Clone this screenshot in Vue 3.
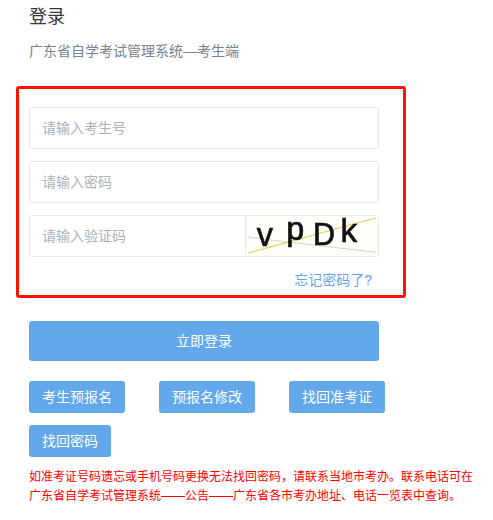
<script setup>
const fields = ['请输入考生号', '请输入密码']
const links = ['考生预报名', '预报名修改', '找回准考证', '找回密码']
</script>

<template>
  <div class="page">
    <h1 class="title">登录</h1>
    <p class="sub">广东省自学考试管理系统—考生端</p>
    <div class="box">
      <input v-for="f in fields" :key="f" class="field" :placeholder="f" />
      <div class="code-row">
        <input class="field code" placeholder="请输入验证码" />
        <svg class="captcha" viewBox="0 0 134 42" width="134" height="42">
          <rect width="134" height="42" fill="#fefefb" />
          <path d="M0 22 L38 27 L134 38" stroke="#c5dcc0" stroke-width="1" fill="none" />
          <path d="M0 39 L134 2" stroke="#e8d870" stroke-width="1.4" fill="none" />
          <text x="9" y="32" class="cap c1">v</text>
          <text x="40" y="25" class="cap c2">p</text>
          <text x="68" y="30" class="cap c3">D</text>
          <text x="97" y="27" class="cap c4">k</text>
        </svg>
      </div>
      <a class="forgot">忘记密码了?</a>
    </div>
    <button class="login">立即登录</button>
    <div class="links">
      <button v-for="l in links" :key="l" class="link">{{ l }}</button>
    </div>
    <p class="notice">如准考证号码遗忘或手机号码更换无法找回密码，请联系当地市考办。联系电话可在广东省自学考试管理系统——公告——广东省各市考办地址、电话一览表中查询。</p>
  </div>
</template>

<style>
html, body { margin: 0; background: #fff; }
</style>

<style scoped>
.page {
  box-sizing: border-box;
  width: 493px;
  height: 520px;
  overflow: hidden;
  padding: 5px 0 0 29px;
  font-family: "Liberation Sans", "Noto Sans CJK SC", sans-serif;
}
.title {
  margin: 0;
  font-size: 18px;
  font-weight: 400;
  line-height: 24px;
  color: #33393f;
}
.sub {
  margin: 12px 0 0;
  font-size: 14px;
  line-height: 20px;
  color: #76828e;
}
.box {
  box-sizing: border-box;
  width: 390px;
  height: 212px;
  margin: 25px 0 0 -13px;
  padding: 18px 24px 0 10px;
  border: 3px solid #fb1404;
  border-radius: 3px;
  display: flex;
  flex-direction: column;
  gap: 12px;
}
.field {
  box-sizing: border-box;
  width: 350px;
  height: 42px;
  padding: 0 12px;
  border: 1px solid #e4e9ec;
  border-radius: 3px;
  outline: none;
  font: 14px "Liberation Sans", "Noto Sans CJK SC", sans-serif;
  color: #333;
}
.field::placeholder { color: #a9b3bb; opacity: 1; }
.code-row { display: flex; width: 350px; height: 42px; }
.code {
  width: 216px;
  border-right: none;
  border-radius: 3px 0 0 3px;
}
.captcha {
  display: block;
  box-sizing: border-box;
  overflow: visible;
  border: 1px solid #e4e9ec;
  border-radius: 0 3px 3px 0;
  filter: blur(0.3px);
}
.cap {
  font-family: "Liberation Sans", sans-serif;
  fill: #111;
  stroke: #111;
  stroke-width: 0.7px;
}
.c1 { font-size: 34px; }
.c2 { font-size: 34px; }
.c3 { font-size: 32px; }
.c4 { font-size: 35px; }
.forgot {
  align-self: flex-end;
  margin: 1px 7px 0 0;
  font-size: 14px;
  line-height: 20px;
  color: #62a8ea;
}
.login {
  display: block;
  width: 350px;
  height: 40px;
  margin-top: 23px;
  padding: 0 0 2px;
  border: none;
  border-radius: 3px;
  background: #62a8ea;
  color: #fff;
  font: 14px "Liberation Sans", "Noto Sans CJK SC", sans-serif;
}
.links {
  display: flex;
  flex-wrap: wrap;
  gap: 12px 34px;
  width: 440px;
  margin-top: 20px;
}
.link {
  height: 32px;
  padding: 0 13px 2px;
  border: none;
  border-radius: 3px;
  background: #62a8ea;
  color: #fff;
  font: 14px "Liberation Sans", "Noto Sans CJK SC", sans-serif;
}
.notice {
  width: 446px;
  margin: 11px 0 0;
  font-size: 12px;
  line-height: 19px;
  color: #ff0000;
}
</style>
